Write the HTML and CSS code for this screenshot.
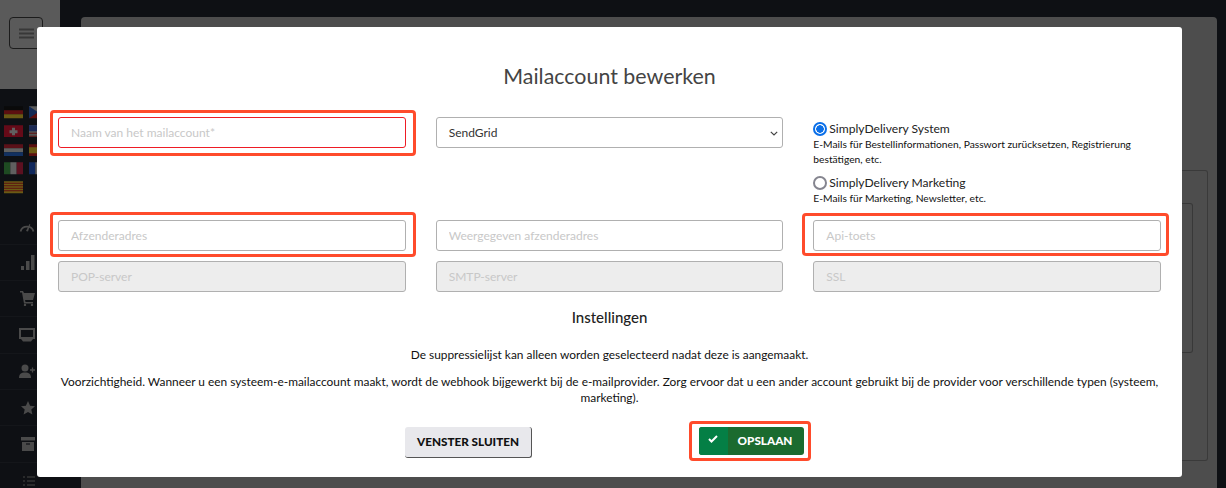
FILE: index.html
```html
<!DOCTYPE html>
<html lang="nl">
<head>
<meta charset="utf-8">
<title>Mailaccount bewerken</title>
<link rel="stylesheet" href="styles.css">
</head>
<body>
<div class="app">
  <aside class="sidebar">
    <div class="brandbar">
      <button class="burger" type="button" aria-label="Menu">
        <svg width="15" height="11" viewBox="0 0 15 11"><path d="M0 1.500h15M0 5.500h15M0 9.500h15" stroke="#383838" stroke-width="2.200"/></svg>
      </button>
    </div>
    <div class="flags">
      <svg class="flag" viewBox="0 0 19 12"><rect width="19" height="4" fill="#0a0a0a"/><rect y="4" width="19" height="4" fill="#5c1010"/><rect y="8" width="19" height="4" fill="#6b5a14"/></svg>
      <svg class="flag" viewBox="0 0 19 12"><rect width="19" height="6" fill="#5a5a5a"/><rect y="6" width="19" height="6" fill="#5c1010"/><path d="M0 0l9 6-9 6z" fill="#142a55"/></svg>
      <svg class="flag" viewBox="0 0 19 12"><rect width="19" height="12" fill="#650a18"/><path d="M8 2.500h3v2.500h2.500v3h-2.500v2h-3v-2h-2.500v-3h2.500z" fill="#606060"/></svg>
      <svg class="flag" viewBox="0 0 19 12"><rect width="19" height="12" fill="#555"/><path d="M0 2h19M0 5h19M0 8h19M0 11h19" stroke="#5c1010" stroke-width="1.200"/><rect width="9" height="6" fill="#1c2a55"/></svg>
      <svg class="flag" viewBox="0 0 19 12"><rect width="19" height="4" fill="#5a1018"/><rect y="4" width="19" height="4" fill="#606060"/><rect y="8" width="19" height="4" fill="#123060"/></svg>
      <svg class="flag" viewBox="0 0 19 12"><rect width="19" height="12" fill="#5c1010"/><rect y="3" width="19" height="6" fill="#6b5a14"/></svg>
      <svg class="flag" viewBox="0 0 19 12"><rect width="6.300" height="12" fill="#1e4a22"/><rect x="6.300" width="6.400" height="12" fill="#606060"/><rect x="12.700" width="6.300" height="12" fill="#5c1020"/></svg>
      <svg class="flag" viewBox="0 0 19 12"><rect width="6.300" height="12" fill="#10285c"/><rect x="6.300" width="6.400" height="12" fill="#606060"/><rect x="12.700" width="6.300" height="12" fill="#5c1010"/></svg>
      <svg class="flag" viewBox="0 0 19 12"><rect width="19" height="12" fill="#6b5a14"/><path d="M0 2h19M0 4.500h19M0 7h19M0 9.500h19" stroke="#5c1010" stroke-width="1.200"/></svg>
    </div>
    <nav class="nav">
      <div class="nav-item"><svg width="16" height="11" viewBox="0 0 16 11"><path d="M1.500 10.500A6.800 6.800 0 0 1 14.500 10.500" fill="none" stroke="#4a4a4a" stroke-width="1.800"/><path d="M7 10l3.500-7 .8.400L9 10.500z" fill="#4a4a4a"/></svg></div>
      <div class="nav-item"><svg width="14" height="15" viewBox="0 0 14 15"><path d="M0 11h3v4H0zM5 6h3.500v9H5zM10 0h3.500v15H10z" fill="#4a4a4a"/></svg></div>
      <div class="nav-item"><svg width="15" height="15" viewBox="0 0 15 15"><path d="M0 0h3l1 2h11l-2 7H5l.5 2H13v1.500H4L2 1.500H0z" fill="#4a4a4a"/><circle cx="5" cy="14" r="1.200" fill="#4a4a4a"/><circle cx="12" cy="14" r="1.200" fill="#4a4a4a"/></svg></div>
      <div class="nav-item"><svg width="16" height="14" viewBox="0 0 16 14"><path d="M1 1h14v9H1z" fill="none" stroke="#4a4a4a" stroke-width="2"/><path d="M2 11h12l-2 2.500H4z" fill="#4a4a4a"/></svg></div>
      <div class="nav-item"><svg width="16" height="14" viewBox="0 0 16 14"><circle cx="6" cy="4" r="3.500" fill="#4a4a4a"/><path d="M0 14c0-4 2-5.500 6-5.500s6 1.500 6 5.500z" fill="#4a4a4a"/><path d="M11 6h5M13.500 3.500v5" stroke="#4a4a4a" stroke-width="1.300"/></svg></div>
      <div class="nav-item"><svg width="14" height="14" viewBox="0 0 14 14"><path d="M7 0l2.100 4.700 4.900.5-3.700 3.300 1.100 5L7 11l-4.400 2.500 1.100-5L0 5.200l4.900-.5z" fill="#4a4a4a"/></svg></div>
      <div class="nav-item"><svg width="14" height="14" viewBox="0 0 14 14"><path d="M0 0h14v3.500H0zM1 5h12v9H1z" fill="#4a4a4a"/><path d="M5 7h4" stroke="#101216" stroke-width="1.200"/></svg></div>
      <div class="nav-item nav-last"><svg width="12" height="10" viewBox="0 0 12 10"><path d="M0 1h2M4 1h8M0 5h2M4 5h8M0 9h2M4 9h8" stroke="#333" stroke-width="1.500"/></svg></div>
    </nav>
  </aside>

  <main class="content">
    <div class="page-card">
      <div class="inner-card"><div class="inner-table"></div></div>
    </div>
  </main>
</div>

<div class="modal">
  <h1 class="modal-title">Mailaccount bewerken</h1>
  <form class="form">
    <div class="form-grid">
      <div class="first-cell">
        <input class="field field-error" type="text" placeholder="Naam van het mailaccount*">
        <span class="mark mark-name"></span>
      </div>
      <div class="first-cell">
        <div class="select">SendGrid
          <svg class="chevron" width="8" height="5" viewBox="0 0 8 5"><path d="M.8.800L4 4l3.200-3.200" fill="none" stroke="#444" stroke-width="1.200"/></svg>
        </div>
      </div>
      <div class="radios">
        <div class="radio-row"><span class="radio radio-on"></span><span class="radio-label">SimplyDelivery System</span></div>
        <p class="radio-help">E-Mails für Bestellinformationen, Passwort zurücksetzen, Registrierung bestätigen, etc.</p>
        <div class="radio-row radio-row-second"><span class="radio"></span><span class="radio-label">SimplyDelivery Marketing</span></div>
        <p class="radio-help">E-Mails für Marketing, Newsletter, etc.</p>
      </div>

      <div class="cell"><input class="field" type="text" placeholder="Afzenderadres"><span class="mark mark-sender"></span></div>
      <div class="cell"><input class="field" type="text" placeholder="Weergegeven afzenderadres"></div>
      <div class="cell"><input class="field" type="text" placeholder="Api-toets"><span class="mark mark-api"></span></div>

      <input class="field" type="text" placeholder="POP-server" disabled>
      <input class="field" type="text" placeholder="SMTP-server" disabled>
      <input class="field" type="text" placeholder="SSL" disabled>
    </div>

    <h2 class="section-title">Instellingen</h2>
    <p class="note note-first">De suppressielijst kan alleen worden geselecteerd nadat deze is aangemaakt.</p>
    <p class="note note-second">Voorzichtigheid. Wanneer u een systeem-e-mailaccount maakt, wordt de webhook bijgewerkt bij de e-mailprovider. Zorg ervoor dat u een ander account gebruikt bij de provider voor verschillende typen (systeem, marketing).</p>

    <div class="actions">
      <button class="btn-close" type="button">VENSTER SLUITEN</button>
      <div class="save-wrap">
        <button class="btn-save" type="button">
          <span class="save-icon"><svg width="10" height="8" viewBox="0 0 10 8"><path d="M1 4l2.500 2.500L9 1" fill="none" stroke="#fff" stroke-width="2"/></svg></span>
          <span class="save-label">OPSLAAN</span>
        </button>
        <span class="mark mark-save"></span>
      </div>
    </div>
  </form>
</div>
</body>
</html>
```

FILE: styles.css
```css
* { box-sizing: border-box; }
html, body { margin: 0; height: 100%; overflow: hidden; }
body {
  position: relative;
  width: 1226px;
  height: 488px;
  background: #0e1014;
  font-family: Lato, "Open Sans", sans-serif;
  color: #111;
}

.app { display: flex; height: 488px; }
.sidebar { width: 60px; flex: none; background: #0e1014; }
.brandbar { height: 89px; background: #5a5a5a; padding: 17px 0 0 9px; }
.burger {
  width: 34px;
  height: 32px;
  padding: 0;
  display: flex;
  align-items: center;
  justify-content: center;
  background: transparent;
  border: 1px solid #1c1c1c;
  border-radius: 4px;
}
.flags {
  display: grid;
  grid-template-columns: 19px 19px;
  column-gap: 6px;
  row-gap: 6.250px;
  padding: 17px 0 0 4px;
}
.flag { width: 19px; height: 12.500px; display: block; }
.nav { margin-top: 15px; }
.nav-item {
  height: 36.300px;
  display: flex;
  align-items: center;
  justify-content: flex-end;
  padding-right: 25px;
  border-bottom: 1px solid #14161a;
}
.nav-last { border-bottom: 0; }

.content { flex: 1; padding: 17px 9px 0 21px; background: #0e1014; }
.page-card {
  height: 471px;
  background: #4d4d4d;
  border-radius: 4px 4px 0 0;
  padding: 153px 0 0 0;
}
.inner-card {
  height: 291px;
  border: 1px solid #3a3a3a;
  border-left: 0;
  border-radius: 0 3px 3px 0;
  margin-left: 900px;
  margin-right: 9px;
  padding: 32px 14px 0 0;
}
.inner-table {
  height: 150px;
  border: 1px solid #383838;
  border-left: 0;
  border-radius: 0 3px 3px 0;
}

.modal {
  position: absolute;
  left: 37px;
  top: 27px;
  width: 1145px;
  height: 450px;
  background: #fff;
  border-radius: 3px;
  padding: 34px 21px 0;
}
.modal-title {
  margin: 0;
  height: 30px;
  font-size: 21.400px;
  line-height: 30px;
  font-weight: 400;
  text-align: center;
  color: #444;
}
.form { margin-top: 26px; }
.form-grid {
  display: grid;
  grid-template-columns: repeat(3, 1fr);
  column-gap: 30px;
  row-gap: 10px;
}
.first-cell, .cell { position: relative; }
.first-cell { height: 93px; }
.field, .select {
  display: block;
  width: 100%;
  height: 31px;
  padding: 0 12px 1px;
  background: #fff;
  border: 1px solid #b0b0b0;
  border-radius: 3px;
  font-family: inherit;
  font-size: 12px;
  color: #444;
  outline: none;
}
.field::placeholder { color: #c8c8c8; opacity: 1; }
.field:disabled { background: #ededed; }
.field-error { border-color: #ee1c25; }
.select { position: relative; display: flex; align-items: center; color: #333; }
.chevron { position: absolute; right: 4px; top: 13px; }

.radios { height: 93px; }
.radio-row { display: flex; align-items: center; height: 18px; margin-top: 3px; }
.radio-row-second { margin-top: 7px; }
.radio {
  flex: none;
  width: 14px;
  height: 14px;
  border: 2px solid #85858f;
  border-radius: 50%;
  margin-right: 2px;
  background: #fff;
}
.radio-on { border-color: #0a6fe8; background: radial-gradient(circle, #0a6fe8 0 3.500px, #fff 4px); }
.radio-label { font-size: 12.100px; line-height: 16px; color: #222; }
.radio-help { margin: -1px 0 0; font-size: 10.250px; line-height: 15px; color: #111; }

.mark {
  position: absolute;
  border: 3px solid #ff4b2b;
  border-radius: 4px;
  pointer-events: none;
}
.mark-name { left: -8px; top: -7px; width: 366px; height: 46px; }
.mark-sender { left: -8px; top: -8px; width: 366px; height: 45px; }
.mark-api { left: -11px; top: -7px; width: 367px; height: 43px; }
.mark-save { left: -10px; top: -6px; width: 122px; height: 40px; }

.section-title {
  margin: 16px 0 0;
  font-size: 15px;
  line-height: 18px;
  font-weight: 500;
  text-align: center;
  color: #222;
}
.note {
  margin: 0;
  font-size: 11.900px;
  line-height: 16px;
  text-align: center;
  color: #111;
}
.note-first { margin-top: 21px; }
.note-second { margin-top: 11px; }

.actions {
  display: flex;
  margin-top: 21px;
  padding-left: 347px;
  gap: 167px;
  align-items: flex-start;
}
.btn-close {
  width: 127px;
  height: 31px;
  padding: 0 0 2px;
  background: #e8e8ec;
  border: 0;
  border-right: 1px solid #555;
  border-bottom: 1px solid #555;
  border-radius: 3px;
  font-family: inherit;
  font-size: 11.700px;
  font-weight: 900;
  color: #111;
}
.save-wrap { position: relative; }
.btn-save {
  display: flex;
  width: 105px;
  height: 28px;
  padding: 0;
  border: 0;
  border-radius: 3px;
  overflow: hidden;
  background: #1b6b2f;
  font-family: inherit;
}
.save-icon {
  width: 29px;
  height: 28px;
  flex: none;
  background: #047f45;
  display: flex;
  justify-content: center;
  padding-top: 8px;
  padding-right: 2px;
}
.save-label {
  flex: 1;
  line-height: 26px;
  font-size: 11.700px;
  font-weight: 900;
  color: #fff;
  text-align: center;
  padding-right: 2px;
}
```
